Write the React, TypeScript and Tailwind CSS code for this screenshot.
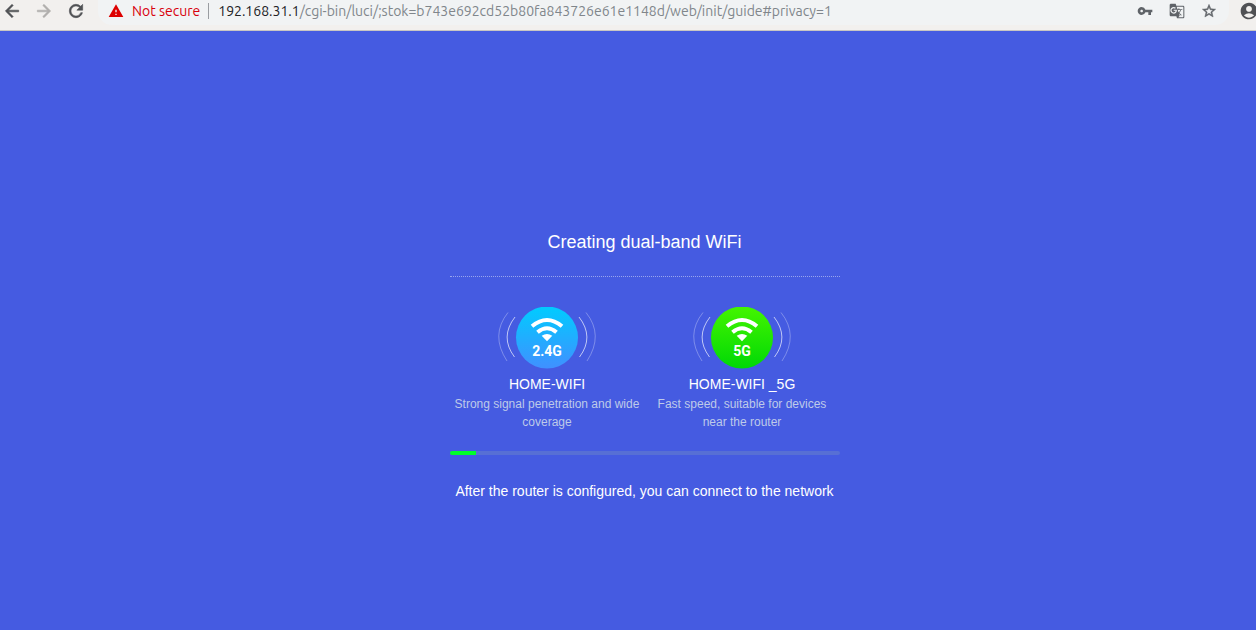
import {
  MdAccountCircle,
  MdArrowBack,
  MdArrowForward,
  MdGTranslate,
  MdRefresh,
  MdStarBorder,
  MdVpnKey,
  MdWarning,
} from "react-icons/md";

type Band = {
  id: string;
  label: string;
  name: string;
  description: string;
  from: string;
  to: string;
};

const bands: Band[] = [
  {
    id: "band-24",
    label: "2.4G",
    name: "HOME-WIFI",
    description: "Strong signal penetration and wide coverage",
    from: "#00ccff",
    to: "#4090ff",
  },
  {
    id: "band-5",
    label: "5G",
    name: "HOME-WIFI _5G",
    description: "Fast speed, suitable for devices near the router",
    from: "#44f500",
    to: "#00d806",
  },
];

// Thickens the drawn path only; the icons' transparent bounding path is left alone.
const boldIcon = "[&>path:last-child]:stroke-[0.7]";

function BrowserBar() {
  return (
    <header className="flex h-[31px] items-start border-b border-[#c9c6c3] bg-[#f2f0ee] text-[#505154]">
      <nav className="flex h-[22px] shrink-0 items-center gap-3 pl-[2px]">
        <button type="button" aria-label="Back">
          <MdArrowBack size={20} className={boldIcon} />
        </button>
        <button type="button" aria-label="Forward" className="text-[#b0aeac]">
          <MdArrowForward size={20} className={boldIcon} />
        </button>
        <button type="button" aria-label="Reload">
          <MdRefresh size={20} className={boldIcon} />
        </button>
      </nav>
      <div className="ml-3 flex h-[25px] min-w-0 flex-1 rounded-b-[14px] bg-[#f1f3f4] pr-3 pl-[10px]">
        <div className="flex h-[22px] min-w-0 flex-1 items-center font-['Ubuntu','Roboto',sans-serif] text-[14px] leading-5">
          <MdWarning size={16} className="mr-2 shrink-0 text-[#dd0000]" />
          <span className="shrink-0 text-[#d8000c]">Not secure</span>
          <span className="mr-[9px] ml-2 h-4 w-px shrink-0 bg-[#9a9da1]" />
          <span className="truncate text-[#80868b]">
            <span className="text-[#202124]">192.168.31.1</span>
            /cgi-bin/luci/;stok=b743e692cd52b80fa843726e61e1148d/web/init/guide#privacy=1
          </span>
        </div>
        <div className="flex h-[22px] shrink-0 items-center gap-4 text-[#5f6368]">
          <button type="button" aria-label="Saved passwords">
            <MdVpnKey size={16} />
          </button>
          <button type="button" aria-label="Translate this page">
            <MdGTranslate size={16} />
          </button>
          <button type="button" aria-label="Bookmark this page">
            <MdStarBorder size={16} className={boldIcon} />
          </button>
        </div>
      </div>
      <div className="flex h-[22px] w-[27px] shrink-0 items-center overflow-hidden pl-[10px]">
        <button type="button" aria-label="Profile" className="shrink-0">
          <MdAccountCircle size={20} />
        </button>
      </div>
    </header>
  );
}

function BandIcon({ band }: { band: Band }) {
  return (
    <svg width="100" height="62" viewBox="0 0 100 62" role="img" aria-label={band.label}>
      <defs>
        <linearGradient id={band.id} x1="0" y1="0" x2="0" y2="1">
          <stop offset="0" stopColor={band.from} />
          <stop offset="1" stopColor={band.to} />
        </linearGradient>
      </defs>
      <g fill="none" stroke="#ffffff" strokeWidth="1">
        <path d="M18 10Q2.500 30 17.500 50" opacity="0.65" />
        <path d="M11 5.500Q-7 28 10 54" opacity="0.3" />
        <path d="M82 10Q97.500 30 82.500 50" opacity="0.65" />
        <path d="M89 5.500Q107 28 90 54" opacity="0.3" />
      </g>
      <circle cx="50" cy="30.500" r="31" fill={`url(#${band.id})`} />
      <g fill="none" stroke="#ffffff" strokeWidth="4">
        <path d="M35 19.200Q50 6.800 65 19.200" />
        <path d="M40.500 25.200Q50 17.200 59.500 25.200" />
      </g>
      <path d="M44.700 28.800Q50 25 55.300 28.800L50 34.200Z" fill="#ffffff" />
      <text
        x="50"
        y="49"
        textAnchor="middle"
        fill="#ffffff"
        className="font-['Roboto',sans-serif] text-[14px] font-bold"
      >
        {band.label}
      </text>
    </svg>
  );
}

export default function App() {
  const progress = 6.7;

  return (
    <div className="flex min-h-screen flex-col bg-[#455be1] font-['Liberation_Sans',Arial,sans-serif]">
      <BrowserBar />
      <main className="flex flex-1 flex-col items-center pt-[199px] pl-[33px] text-white">
        <section className="w-full max-w-[390px] text-center">
          <h1 className="border-b border-dotted border-white/45 pb-[22px] text-[18px] leading-6">
            Creating dual-band WiFi
          </h1>
          <div className="grid grid-cols-2 pt-[30px]">
            {bands.map((band) => (
              <div key={band.id} className="flex flex-col items-center px-1">
                <BandIcon band={band} />
                <h2 className="mt-[5px] text-[14px] leading-5">{band.name}</h2>
                <p className="mt-px text-[12px] leading-[18px] text-[#becae9]">{band.description}</p>
              </div>
            ))}
          </div>
          <div
            role="progressbar"
            aria-label="Creating WiFi"
            aria-valuenow={progress}
            aria-valuemin={0}
            aria-valuemax={100}
            className="mt-5 h-1 overflow-hidden rounded-full bg-[#576fd5]"
          >
            <div className="h-full bg-[#00ff2a]" style={{ width: `${progress}%` }} />
          </div>
          <p className="pt-[26px] text-[14px] leading-5">
            After the router is configured, you can connect to the network
          </p>
        </section>
      </main>
    </div>
  );
}
